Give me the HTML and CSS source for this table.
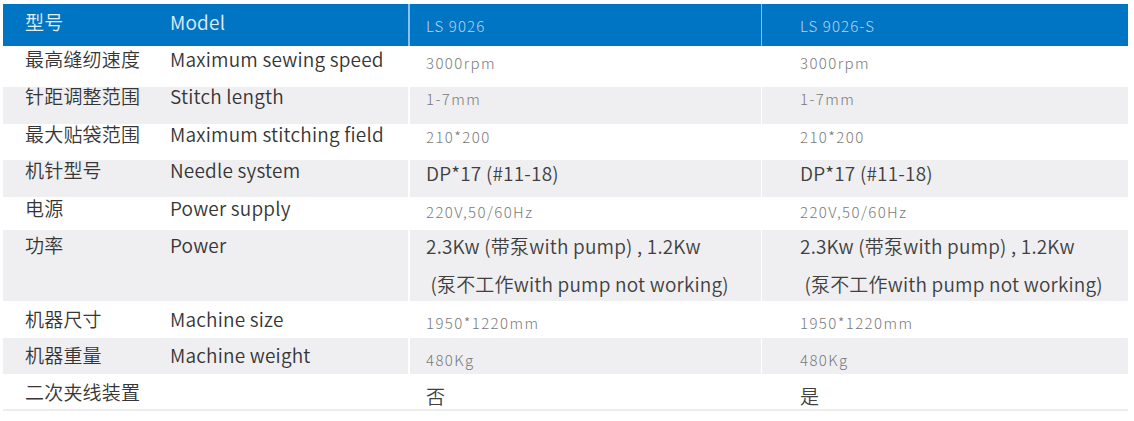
FILE: index.html
```html
<!DOCTYPE html>
<html lang="zh">
<head>
<meta charset="utf-8">
<title>LS 9026 参数</title>
<link rel="stylesheet" href="styles.css">
</head>
<body>
<div class="spec">
  <div class="row head">
    <div class="c zh">型号</div>
    <div class="c en">Model</div>
    <div class="c v v1 light">LS 9026</div>
    <div class="c v v2 light">LS 9026-S</div>
  </div>
  <div class="row r1">
    <div class="c zh">最高缝纫速度</div>
    <div class="c en">Maximum sewing speed</div>
    <div class="c v v1 light">3000rpm</div>
    <div class="c v v2 light">3000rpm</div>
  </div>
  <div class="row r2 alt">
    <div class="c zh">针距调整范围</div>
    <div class="c en">Stitch length</div>
    <div class="c v v1 light">1-7mm</div>
    <div class="c v v2 light">1-7mm</div>
  </div>
  <div class="row r3">
    <div class="c zh">最大贴袋范围</div>
    <div class="c en">Maximum stitching field</div>
    <div class="c v v1 light">210*200</div>
    <div class="c v v2 light">210*200</div>
  </div>
  <div class="row r4 alt">
    <div class="c zh">机针型号</div>
    <div class="c en">Needle system</div>
    <div class="c v v1">DP*17 (#11-18)</div>
    <div class="c v v2">DP*17 (#11-18)</div>
  </div>
  <div class="row r5">
    <div class="c zh">电源</div>
    <div class="c en">Power supply</div>
    <div class="c v v1 light">220V,50/60Hz</div>
    <div class="c v v2 light">220V,50/60Hz</div>
  </div>
  <div class="row r6 alt">
    <div class="c zh">功率</div>
    <div class="c en">Power</div>
    <div class="c v v1 multi"><span>2.3Kw (带泵with pump) , 1.2Kw</span><span>&nbsp;(泵不工作with pump not working)</span></div>
    <div class="c v v2 multi"><span>2.3Kw (带泵with pump) , 1.2Kw</span><span>&nbsp;(泵不工作with pump not working)</span></div>
  </div>
  <div class="row r7">
    <div class="c zh">机器尺寸</div>
    <div class="c en">Machine size</div>
    <div class="c v v1 light">1950*1220mm</div>
    <div class="c v v2 light">1950*1220mm</div>
  </div>
  <div class="row r8 alt">
    <div class="c zh">机器重量</div>
    <div class="c en">Machine weight</div>
    <div class="c v v1 light">480Kg</div>
    <div class="c v v2 light">480Kg</div>
  </div>
  <div class="row r9">
    <div class="c zh">二次夹线装置</div>
    <div class="c en"></div>
    <div class="c v v1">否</div>
    <div class="c v v2">是</div>
  </div>
</div>
</body>
</html>
```

FILE: styles.css
```css
* {
  box-sizing: border-box;
  margin: 0;
}

body {
  margin: 0;
  background: #ffffff;
  font-family: "Noto Sans CJK SC", "Noto Sans", sans-serif;
}

.spec {
  margin: 4px 0 0 3px;
  width: 1125px;
  border-bottom: 2px solid #ededef;
}

.row {
  display: grid;
  grid-template-columns: 165px 240px 353px 367px;
  height: var(--h);
}

.row.alt {
  background: #efeff1;
}

.c {
  padding-top: var(--lt);
  font-size: 19px;
  line-height: 18px;
  font-weight: 350;
  letter-spacing: 0.2px;
  color: #363636;
  white-space: nowrap;
}

.zh {
  padding-left: 22px;
}

.en {
  padding-left: 2px;
}

.v {
  padding-top: var(--vt);
  color: #404040;
}

.v1 {
  border-left: 2px solid #ffffff;
  padding-left: 16px;
}

.v2 {
  border-left: 1px solid #ffffff;
  padding-left: 38px;
}

.light {
  font-size: 15px;
  line-height: 12px;
  font-weight: 300;
  letter-spacing: 1.4px;
  color: #7a7a7a;
}

.multi {
  display: flex;
  flex-direction: column;
  gap: 20px;
}

.head {
  background: #0075c4;
  --h: 42px;
  --lt: 9px;
  --vt: 16px;
}

.head .c {
  color: #e2edf7;
}

.head .v {
  color: #b9d4ee;
  letter-spacing: 1.1px;
}

.head .v1,
.head .v2 {
  border-left-color: #8cc0e8;
}

.r1 { --h: 41px; --lt: 4px; --vt: 11px; }
.r2 { --h: 37px; --lt: 0px; --vt: 6px; }
.r3 { --h: 36px; --lt: 1px; --vt: 7px; }
.r4 { --h: 37px; --lt: 1px; --vt: 4px; }
.r5 { --h: 33px; --lt: 2px; --vt: 9px; }
.r6 { --h: 71px; --lt: 6px; --vt: 7px; }
.r7 { --h: 37px; --lt: 9px; --vt: 16px; }
.r8 { --h: 36px; --lt: 8px; --vt: 16px; }
.r9 { --h: 35px; --lt: 9px; --vt: 13px; }
```
